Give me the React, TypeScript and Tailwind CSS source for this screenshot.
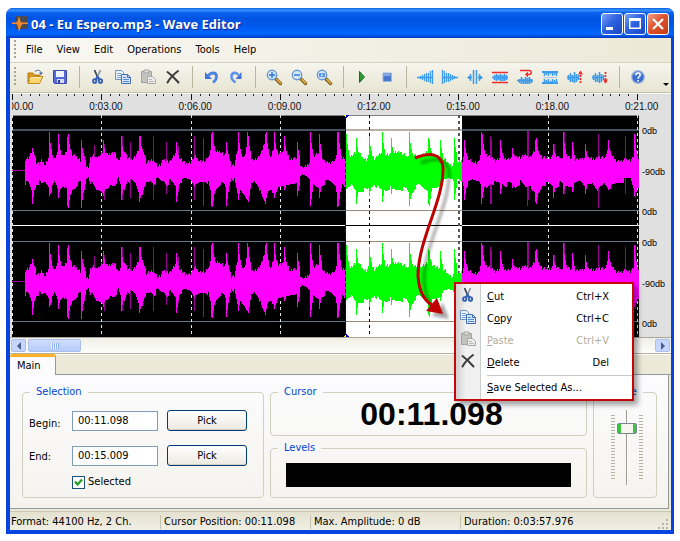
import type { ReactNode } from "react";

/* ---------- waveform data: [x, above, below] ---------- */
const BODY: number[][] = [
  [25, 11, 13], [28, 12, 13], [31, 18, 20], [33, 20, 22], [36, 8, 14], [39, 6, 12], [41, 10, 14], [45, 6, 12], [48, 12, 16],
  [50, 16, 22], [54, 12, 12], [57, 17, 18], [60, 18, 18], [63, 14, 14], [66, 20, 20], [68, 28, 30], [72, 15, 20], [76, 14, 15],
  [80, 10, 12], [84, 14, 20], [86, 4, 8], [88, 4, 6], [90, 12, 12], [93, 15, 15], [96, 12, 20], [100, 16, 20], [103, 20, 22],
  [107, 16, 20], [110, 17, 15], [114, 18, 15], [118, 9, 9], [121, 14, 18], [124, 20, 20], [127, 12, 10], [131, 11, 11],
  [135, 14, 13], [139, 22, 24], [143, 20, 22], [146, 8, 13], [150, 9, 11], [154, 10, 13], [157, 4, 9], [160, 5, 11],
  [163, 11, 11], [167, 9, 14], [170, 9, 11], [175, 17, 16], [178, 13, 13], [181, 11, 11], [185, 6, 9], [190, 8, 9],
  [195, 14, 16], [200, 9, 12], [205, 9, 11], [208, 13, 13], [212, 28, 30], [216, 18, 18], [220, 19, 13], [224, 15, 15],
  [227, 18, 24], [231, 5, 7], [234, 6, 10], [237, 20, 24], [240, 17, 20], [244, 13, 24], [247, 28, 28], [250, 11, 15],
  [254, 11, 11], [258, 13, 15], [261, 18, 26], [264, 28, 32], [268, 14, 20], [271, 14, 18], [274, 24, 28], [278, 17, 17],
  [283, 18, 15], [286, 18, 17], [290, 10, 15], [294, 12, 13], [298, 10, 10], [302, 2, 5], [306, 4, 6], [309, 8, 8],
  [312, 13, 15], [316, 16, 18], [320, 15, 17], [325, 8, 12], [330, 8, 11], [335, 10, 15], [338, 28, 32], [342, 12, 15],
  [346, 14, 18], [350, 14, 14], [354, 17, 20], [358, 18, 22], [362, 13, 20], [366, 11, 20], [370, 17, 18], [374, 12, 14],
  [380, 17, 20], [385, 16, 20], [390, 16, 18], [395, 19, 20], [400, 18, 19], [406, 14, 19], [410, 16, 26], [415, 15, 17],
  [419, 13, 15], [425, 17, 19], [430, 19, 19], [435, 14, 18], [440, 12, 14], [445, 11, 10], [448, 6, 8], [452, 5, 8],
  [455, 8, 12], [458, 8, 10], [462, 10, 12], [464, 18, 18], [468, 11, 13], [472, 8, 10], [478, 8, 10], [482, 22, 13],
  [486, 15, 18], [490, 13, 13], [495, 10, 13], [500, 13, 13], [505, 12, 15], [510, 11, 13], [515, 14, 17], [520, 13, 12],
  [525, 15, 17], [530, 13, 15], [536, 22, 28], [542, 13, 15], [548, 12, 13], [554, 15, 18], [560, 12, 13], [566, 15, 16],
  [570, 12, 15], [575, 11, 13], [580, 11, 10], [586, 13, 16], [592, 11, 13], [598, 13, 20], [604, 12, 13], [608, 22, 18],
  [612, 14, 16], [616, 10, 13], [620, 9, 12], [625, 11, 10], [630, 10, 8], [634, 14, 20], [639, 13, 20],
];

const PEAKS: number[][] = [
  [32, 22, 34], [49, 38, 26], [58, 36, 28], [67, 33, 36], [68, 36, 38], [81, 30, 38], [103, 30, 26],
  [121, 34, 30], [139, 34, 32], [140, 34, 28], [176, 28, 32], [211, 36, 36], [212, 38, 37], [226, 28, 36],
  [238, 38, 30], [247, 38, 30], [248, 34, 32], [265, 36, 34], [266, 38, 28], [274, 38, 28], [284, 34, 20],
  [297, 28, 26], [310, 38, 36], [319, 36, 28], [337, 38, 37], [338, 38, 36], [346, 36, 18], [356, 32, 34], [369, 34, 26],
  [382, 38, 32], [391, 32, 24], [409, 38, 36], [428, 32, 34], [429, 30, 36], [440, 30, 20],
  [454, 32, 30], [464, 30, 30], [481, 38, 34], [482, 36, 28], [500, 30, 24], [512, 22, 18], [535, 30, 32],
  [536, 32, 34], [553, 26, 28], [563, 38, 24], [572, 28, 22], [585, 26, 24], [608, 30, 20], [634, 36, 26],
];

const FAINT_PEAKS: number[][] = [
  [94, 25, 16], [104, 26, 30], [122, 34, 30], [130, 28, 28], [153, 34, 30], [166, 28, 24], [178, 24, 22], [194, 34, 30],
  [203, 32, 36], [213, 38, 32], [490, 34, 34], [491, 30, 34], [527, 39, 36], [528, 39, 30], [537, 30, 30], [554, 26, 20],
  [564, 38, 24], [573, 24, 22], [598, 36, 38], [625, 34, 24], [635, 36, 28],
];

const SEL_START = 346;
const SEL_END = 462;

function bodyAt(x: number) {
  let i = 0;
  while (i < BODY.length - 2 && BODY[i + 1][0] < x) i++;
  const a = BODY[i];
  const b = BODY[i + 1];
  const t = Math.max(0, Math.min(1, (x - a[0]) / (b[0] - a[0])));
  const noiseUp = ((x * 37) % 11) / 3 - 2;
  const noiseDown = ((x * 53) % 13) / 3 - 2;
  return [
    Math.max(2, Math.round(a[1] + (b[1] - a[1]) * t + noiseUp)),
    Math.max(3, Math.round(a[2] + (b[2] - a[2]) * t + noiseDown)),
  ];
}

function bars(cy: number, from: number, to: number) {
  let d = "";
  const bar = (x: number, u: number, w: number) => {
    if (x >= from && x < to) d += `M${x} ${cy - u}h1v${u + w}h-1z`;
  };
  for (let x = from; x < to; x++) {
    const [u, w] = bodyAt(x);
    bar(x, u, w);
  }
  for (const [x, u, w] of PEAKS) {
    bar(x, u, w);
    bar(x + 1, Math.round(u * 0.72), Math.round(w * 0.8));
    bar(x + 2, Math.round(u * 0.55), Math.round(w * 0.6));
  }
  return d;
}

const faint = (cy: number) => FAINT_PEAKS.map(([x, u, w]) => `M${x} ${cy - u}h1v${u + w}h-1z`).join("");

const GRID = [12, 101, 191, 280, 369, 458, 548, 637];

function Waveform() {
  return (
    <svg className="block h-[222px] min-w-0 flex-1" viewBox="12 115 627 222" preserveAspectRatio="none" shapeRendering="crispEdges" role="img" aria-label="Waveform">
      <rect x="12" y="115" width="627" height="222" fill="#000" />
      <rect x={SEL_START} y="115" width={SEL_END - SEL_START} height="222" fill="#fff" />
      <rect x="12" y="114" width="627" height="2" fill="#808080" />
      <rect x="12" y="129" width="627" height="2" fill="#44525e" />
      <rect x="12" y="210" width="627" height="1" fill="#64788a" />
      <rect x="12" y="225" width="627" height="1" fill="#fff" />
      <rect x="12" y="241" width="627" height="1" fill="#64788a" />
      <rect x="12" y="321" width="627" height="1" fill="#64788a" />
      <rect x={SEL_START} y="129" width="116" height="2" fill="#bcb0a6" />
      <rect x={SEL_START} y="210" width="116" height="1" fill="#9b8776" />
      <rect x={SEL_START} y="225" width="116" height="1" fill="#000" />
      <rect x={SEL_START} y="241" width="116" height="1" fill="#9b8776" />
      <rect x={SEL_START} y="321" width="116" height="1" fill="#9b8776" />
      {GRID.map((x) => (
        <path key={x} d={`M${x + 0.5} 115V337`} stroke={x === 369 ? "#000" : x === 458 ? "#555" : "#e4e4e4"} strokeWidth={x === 458 ? 2 : 1} strokeDasharray="3 3" />
      ))}
      <path d="M12 170h14v1h-14zM12 281h14v1h-14z" fill="#a000a0" />
      {[170, 281].map((cy) => (
        <g key={cy}>
          <path d={faint(cy)} fill="#980098" />
          <path d={bars(cy, 25, SEL_START)} fill="#ff00ff" />
          <path d={bars(cy, SEL_START, SEL_END)} fill="#00ff00" />
          <path d={bars(cy, SEL_END, 639)} fill="#ff00ff" />
        </g>
      ))}
      <path d="M345.5 115V337" stroke="#0000d0" strokeDasharray="4 2" />
      <path d="M343 115h3v3zM343 337h3v-3z" fill="#ffff00" />
      <path d="M346 115h3l-3 3zM346 334l3 3h-3z" fill="#0000d0" />
    </svg>
  );
}

/* ---------- icons ---------- */
function Icon({ children, size = 18 }: { children: ReactNode; size?: number }) {
  return (
    <svg width={size} height={size} viewBox="0 0 18 18" fill="none" aria-hidden="true">
      {children}
    </svg>
  );
}

const OpenIcon = () => (
  <Icon>
    <path d="M2 15V5h5l1 2h6v3" fill="#d99a1c" stroke="#b47a12" />
    <path d="M2 15.500l3-7h12l-3.500 7z" fill="#fcd670" stroke="#c58a1a" />
    <path d="M4 12l1-2.500h10" stroke="#fff1b8" />
    <path d="M9 3.500c3-2.500 6-1 6 2" stroke="#4b6fa8" />
    <path d="M13 4.500h4l-2 2.700z" fill="#4b6fa8" />
  </Icon>
);
const SaveIcon = () => (
  <Icon>
    <path d="M2.500 2.500h13v13h-12l-1-1z" fill="#5468d8" stroke="#3c49aa" />
    <path d="M5 3h8v6H5z" fill="#eef2fd" />
    <path d="M6 11h7v4H6z" fill="#d8dcec" />
    <path d="M7 12h2v3H7z" fill="#2f3c9c" />
  </Icon>
);
const CutIcon = () => (
  <Icon>
    <path d="M5.500 2l3.500 8" stroke="#3c4656" strokeWidth="1.800" />
    <path d="M11.500 2l-3.500 8" stroke="#8a98ac" strokeWidth="1.800" />
    <ellipse cx="5.700" cy="13" rx="1.600" ry="1.900" stroke="#3560b8" strokeWidth="1.900" />
    <ellipse cx="11.500" cy="13" rx="1.600" ry="1.900" stroke="#3560b8" strokeWidth="1.900" />
    <path d="M6.800 11.500l1.800-2.500 1.800 2.500" stroke="#3560b8" strokeWidth="2.200" />
  </Icon>
);
const CopyIcon = () => (
  <Icon>
    <path d="M1.500 2.500h6l2 2v7h-8z" fill="#eef5ff" stroke="#6a90c8" />
    <path d="M3 5.500h4M3 7.500h5M3 9.500h5" stroke="#7ea4dc" />
    <path d="M7.500 6.500h6l3 3v6h-9z" fill="#d4e6ff" stroke="#4270b4" />
    <path d="M9 9.500h3M9 11.500h6M9 13.500h6" stroke="#5a8ad0" />
    <path d="M13.500 6.500v3h3" stroke="#4270b4" />
  </Icon>
);
const PasteIcon = () => (
  <Icon>
    <path d="M2.500 3.500h10v11h-10z" fill="#c2c2bf" stroke="#a2a29e" />
    <path d="M5 2h5v3H5z" fill="#e0e0dc" stroke="#a2a29e" />
    <path d="M8.500 8.500h5l3 3v4h-8z" fill="#ececea" stroke="#a8a8a4" />
    <path d="M10 11.500h3M10 13.500h5" stroke="#b8b8b4" />
  </Icon>
);
const DeleteIcon = () => (
  <Icon>
    <path d="M3.500 4c4 3 7 6 11 10.500M14 3C10 6 6 10 3.500 14.500" stroke="#3c3c3c" strokeWidth="2" strokeLinecap="round" />
  </Icon>
);
const UndoIcon = () => (
  <Icon>
    <path d="M3 4v7h7z" fill="#3f74d8" />
    <path d="M6 8c3-4 8-4 8.500 0 .3 3-1.500 5-3.500 6.500" stroke="#4d83e2" strokeWidth="2.800" />
  </Icon>
);
const RedoIcon = () => (
  <Icon>
    <path d="M14.500 4v7h-6z" fill="#3f74d8" />
    <path d="M11.500 7C9 3.500 5 4.500 4.500 8c-.3 3 1.500 5 4 6.500" stroke="#5f92ea" strokeWidth="2.600" />
  </Icon>
);
function ZoomIcon({ mark }: { mark: string }) {
  return (
    <Icon>
      <path d="M11 11l4.500 4.500" stroke="#8a6420" strokeWidth="3.400" strokeLinecap="round" />
      <path d="M12 11.500l3.500 3.500" stroke="#e8b84a" strokeWidth="1.400" strokeLinecap="round" />
      <circle cx="7" cy="7" r="4.700" fill="#d4eafc" stroke="#6c98d0" strokeWidth="1.400" />
      <path d={mark} stroke="#2c72d4" strokeWidth="1.400" />
    </Icon>
  );
}
const PlayIcon = () => (
  <Icon>
    <path d="M6.500 3.500v11l5-5.500z" fill="#2f9a2f" stroke="#1d6c1d" />
  </Icon>
);
const StopIcon = () => (
  <Icon>
    <path d="M5 5h8.500v8.500H5z" fill="#4a78cc" stroke="#9ab4e4" />
    <path d="M5.500 5.500h7v2.500h-7z" fill="#86a8e4" />
  </Icon>
);
const FadeInIcon = () => (
  <Icon>
    <path d="M1 9.500h15M4.500 8v3M6.500 7v5M8.500 6v7M10.500 5v9M12.500 5v9M14.500 3v12M16.500 2v14" stroke="#3d9bea" strokeWidth="1.300" />
  </Icon>
);
const FadeOutIcon = () => (
  <Icon>
    <path d="M2 9.500h15M13.500 8v3M11.500 7v5M9.500 6v7M7.500 5v9M5.500 5v9M3.500 3v12M1.500 2v14" stroke="#3d9bea" strokeWidth="1.300" />
  </Icon>
);
const SilenceIcon = () => (
  <Icon>
    <path d="M7.500 2v14M10.500 2v14M4.500 6v7M13.500 6v7M2 9.500h4M12 9.500h4" stroke="#3d9bea" strokeWidth="1.500" />
    <path d="M5 6.500v6l-4-3zM13 6.500v6l4-3z" fill="#3d9bea" />
  </Icon>
);
const NormalizeIcon = () => (
  <Icon>
    <path d="M1 9.500h16M3.500 7v5M5.500 6v7M7.500 7v5M9.500 6v7M11.500 7v6M13.500 6v7M15.500 7v5" stroke="#3d9bea" strokeWidth="1.700" />
    <path d="M1 4.500h16M1 14.500h16" stroke="#ee2c2c" strokeWidth="1.400" />
  </Icon>
);
const ReverseIcon = () => (
  <Icon>
    <path d="M1 12.500h16M3.500 11v4M5.500 9v7M7.500 11v5M9.500 9v7M11.500 10v6M13.500 9v7M15.500 11v4" stroke="#3d9bea" strokeWidth="1.700" />
    <path d="M4 2.500h9c3 0 3 4 0 4h-2" stroke="#ee2c2c" strokeWidth="1.400" />
    <path d="M12 3.500v6l-3-3z" fill="#ee2c2c" />
  </Icon>
);
const InvertIcon = () => (
  <Icon>
    <path d="M1 4h16M1 15h16" stroke="#3d9bea" strokeWidth="2" />
    <path d="M3.500 3v5M5.500 3v4M7.500 3v5M9.500 3v3M11.500 3v5M13.500 3v4M15.500 3v5M3.500 11v4M5.500 12v4M7.500 11v4M9.500 13v3M11.500 11v4M13.500 12v4M15.500 11v4" stroke="#3d9bea" strokeWidth="1.500" />
    <path d="M2 9.500h14" stroke="#a8cdec" />
  </Icon>
);
function GainIcon({ up = false }: { up?: boolean }) {
  return (
    <Icon>
      <path d="M1 9.500h12M2.500 7v5M4.500 5v9M6.500 7v7M8.500 4v11M10.500 6v8M12.500 7v5" stroke="#3d9bea" strokeWidth="1.600" />
      <path d="M14.500 4v11" stroke="#ee2c2c" strokeWidth="1.700" strokeDasharray="2 1" />
      <path d={up ? "M12 6.500l2.500-4L17 6.500z" : "M12 11.500l2.500 4L17 11.500z"} fill="#ee2c2c" />
    </Icon>
  );
}
const HelpIcon = () => (
  <Icon>
    <circle cx="9" cy="9" r="6.300" fill="#3c6fd2" stroke="#a9b8da" strokeWidth="1.200" />
    <path d="M5 6.500c1-3 7-3 8 0" stroke="#86aef0" />
    <path d="M6.800 7.200c0-3 4.600-2.800 4.400-.1C11 8.800 9 8.800 9 10.800M9 12v1.600" stroke="#fff" strokeWidth="1.600" />
  </Icon>
);

/* ---------- small parts ---------- */
const Sep = () => <span className="ml-[7px] mr-[5px] h-[22px] w-px shrink-0 bg-[#b9b5a0]" />;

function Tool({ label, children }: { label: string; children: ReactNode }) {
  return (
    <button type="button" aria-label={label} className="flex h-6 w-[25px] shrink-0 items-center justify-center">
      {children}
    </button>
  );
}

const Grip = () => <span className="h-5 w-0.5 shrink-0 bg-[repeating-linear-gradient(#a8a593_0_2px,transparent_2px_4px)]" />;

function MenuRow({ icon, keyChar, before = "", after, shortcut, disabled = false }: {
  icon?: ReactNode; keyChar: string; before?: string; after: string; shortcut?: string; disabled?: boolean;
}) {
  return (
    <button type="button" role="menuitem" disabled={disabled} className="flex h-[22px] w-full items-center pr-[23px] text-left text-black disabled:text-[#b1ad9b]">
      <span className="flex w-7 shrink-0 items-start pb-1">{icon}</span>
      <span className="whitespace-nowrap">{before}<span className="underline">{keyChar}</span>{after}</span>
      {shortcut && <span className="ml-auto">{shortcut}</span>}
    </button>
  );
}

const GROUP = "min-w-0 rounded-[4px] border border-[#d0d0bf]";
const LEGEND = "ml-[7px] px-1.5 leading-[14px] text-[#0046d5]";
const PICK = "ml-[9px] h-[21px] w-20 rounded-[3px] border border-[#003c74] bg-linear-to-b from-white to-[#ece9e0] shadow-[inset_0_-1px_0_#d6d0c4]";
const FIELD = "h-5 w-[86px] border border-[#7f9db9] bg-white px-[5px] text-black outline-none";

function DbScale() {
  return (
    <div className="flex h-[95px] flex-col justify-between">
      <span>0db</span>
      <span>-90db</span>
      <span>0db</span>
    </div>
  );
}

const TIMES = ["0:00.00", "0:03.00", "0:06.00", "0:09.00", "0:12.00", "0:15.00", "0:18.00"];

function RulerTicks() {
  return (
    <svg className="block h-1.5 w-full" viewBox="0 0 90 6" preserveAspectRatio="none" shapeRendering="crispEdges" aria-hidden="true">
      <path d="M0 0h1v6h-1z" fill="#111" />
      {[9, 18, 27, 36, 45, 54, 63, 72, 81].map((x) => (
        <path key={x} d={`M${x} 0h1v2h-1z`} fill="#222" />
      ))}
    </svg>
  );
}

const CAPTION_BTN = "flex size-[22px] items-center justify-center rounded-[3px] border border-white";

export default function App() {
  return (
    <div className="relative w-full bg-white pb-1.5 pl-1.5 pr-1.5 pt-2 font-['DejaVu_Sans_Condensed','Noto_Sans',sans-serif] text-[11px] leading-[14px] text-black">
      <div className="rounded-t-[7px] border-b-4 border-l-4 border-r-[3px] border-[#0844e0] bg-[#ece9d8]">
        {/* title bar */}
        <header className="-ml-1 -mr-[3px] flex h-[30px] items-center rounded-t-[7px] bg-[linear-gradient(#0a5ce0_0,#3a93ff_7%,#0a60ec_16%,#0054e3_35%,#0058ec_60%,#0066ff_86%,#0050e0_94%,#0038b8_100%)] pl-1.5 pr-[5px] pt-0.5">
          <svg width="16" height="18" viewBox="0 0 16 18" aria-hidden="true">
            <path d="M3 1h13v13H3z" fill="#4a4a52" />
            <path d="M0 7.500h4l1.500-1L7 1l1.500 5.500 1.500 1h6V9h-5l-1.500 1L7 17l-1.500-7L4 9H0z" fill="#f08a2c" />
          </svg>
          <h1 className="ml-[3px] whitespace-nowrap font-['Open_Sans','Noto_Sans',sans-serif] text-[13px] font-bold text-white [text-shadow:1px_1px_0_#0a2a90]">04 - Eu Espero.mp3 - Wave Editor</h1>
          <div className="ml-auto flex gap-px">
            <button type="button" aria-label="Minimize" className={CAPTION_BTN + " bg-[linear-gradient(135deg,#7ba2f5,#2e63e0_45%,#1a46c4)]"}>
              <svg width="20" height="20" viewBox="0 0 20 20"><path d="M4 13h7v3H4z" fill="#fff" /></svg>
            </button>
            <button type="button" aria-label="Maximize" className={CAPTION_BTN + " bg-[linear-gradient(135deg,#7ba2f5,#2e63e0_45%,#1a46c4)]"}>
              <svg width="20" height="20" viewBox="0 0 20 20"><path d="M4 4h12v11H4zM5.500 7v6.500h9V7z" fill="#fff" fillRule="evenodd" /></svg>
            </button>
            <button type="button" aria-label="Close" className={CAPTION_BTN + " bg-[linear-gradient(135deg,#f0a088,#e0532f_45%,#c03a14)]"}>
              <svg width="20" height="20" viewBox="0 0 20 20"><path d="M5 5l10 10M15 5L5 15" stroke="#fff" strokeWidth="2.200" /></svg>
            </button>
          </div>
        </header>

        {/* menu bar */}
        <nav className="flex h-[25px] items-center gap-3.5 border-b border-[#d6d2c0] bg-linear-to-r from-[#f8f7f2] to-[#ece9d8] pl-1">
          <Grip />
          {["File", "View", "Edit", "Operations", "Tools", "Help"].map((m) => (
            <button key={m} type="button" className="first-of-type:-ml-1">{m}</button>
          ))}
        </nav>

        {/* toolbar */}
        <div role="toolbar" className="flex h-[30px] items-center border-b border-[#c6c2ac] bg-linear-to-b from-[#f6f5ee] to-[#e8e5d2] pb-px pl-1">
          <Grip />
          <span className="w-1.5 shrink-0" />
          <Tool label="Open"><OpenIcon /></Tool>
          <Tool label="Save"><SaveIcon /></Tool>
          <Sep />
          <Tool label="Cut"><CutIcon /></Tool>
          <Tool label="Copy"><CopyIcon /></Tool>
          <Tool label="Paste"><PasteIcon /></Tool>
          <Tool label="Delete"><DeleteIcon /></Tool>
          <Sep />
          <Tool label="Undo"><UndoIcon /></Tool>
          <Tool label="Redo"><RedoIcon /></Tool>
          <Sep />
          <Tool label="Zoom in"><ZoomIcon mark="M4 7h6M7 4v6" /></Tool>
          <Tool label="Zoom out"><ZoomIcon mark="M4 7h6" /></Tool>
          <Tool label="Actual size"><ZoomIcon mark="M5 5v4M9 5v4M6.500 6h1.200M6.500 8.500h1.200" /></Tool>
          <Sep />
          <Tool label="Play"><PlayIcon /></Tool>
          <Tool label="Stop"><StopIcon /></Tool>
          <Sep />
          <Tool label="Fade in"><FadeInIcon /></Tool>
          <Tool label="Fade out"><FadeOutIcon /></Tool>
          <Tool label="Insert silence"><SilenceIcon /></Tool>
          <Tool label="Normalize"><NormalizeIcon /></Tool>
          <Tool label="Reverse"><ReverseIcon /></Tool>
          <Tool label="Invert"><InvertIcon /></Tool>
          <Tool label="Gain up"><GainIcon up /></Tool>
          <Tool label="Gain down"><GainIcon /></Tool>
          <Sep />
          <Tool label="Help"><HelpIcon /></Tool>
          <button type="button" aria-label="More tools" className="ml-auto mr-0.5 self-end pb-1">
            <svg width="6" height="4" viewBox="0 0 6 4"><path d="M0 0h6L3 3z" fill="#000" /></svg>
          </button>
        </div>

        {/* time ruler */}
        <div className="flex h-[22px] overflow-hidden border-t border-white bg-[#e0e0e0] pl-0.5 font-['Liberation_Sans',Arial,sans-serif] text-[10px] text-[#111]">
          <div className="grid min-w-0 flex-1 grid-cols-7 overflow-hidden">
            {TIMES.map((t) => (
              <div key={t} className="min-w-0">
                <RulerTicks />
                <span className="-ml-3 block whitespace-nowrap">{t}</span>
              </div>
            ))}
          </div>
          <div className="w-[34px] shrink-0">
            <div className="h-1.5 w-px bg-[#111]" />
            <span className="relative -ml-3 block whitespace-nowrap">0:21.00</span>
          </div>
        </div>

        {/* wave display */}
        <div className="flex bg-[#e0e0e0] pl-0.5">
          <Waveform />
          <div className="flex w-8 shrink-0 flex-col gap-[17px] pl-[3px] pt-[9px] font-['Liberation_Sans',Arial,sans-serif] text-[9px]">
            <DbScale />
            <DbScale />
          </div>
        </div>

        {/* horizontal scroll bar */}
        <div className="flex h-4 items-center gap-0.5 border-t border-[#aaa797] bg-linear-to-b from-[#f0efe6] to-[#fefefb] px-px">
          <button type="button" aria-label="Scroll left" className="flex h-[13px] w-[15px] items-center justify-center rounded-[2px] border border-[#a9bfee] bg-[#c6d5fd]">
            <svg width="6" height="8" viewBox="0 0 6 8"><path d="M5 0v8L1 4z" fill="#4d6185" /></svg>
          </button>
          <div className="flex h-[13px] w-[53px] items-center justify-center gap-px rounded-[2px] border border-[#a9bfee] bg-linear-to-b from-[#d0dcfe] to-[#b8cbf8]">
            {[0, 1, 2, 3].map((i) => <span key={i} className="h-1.5 w-px bg-[#eef4fe] shadow-[1px_0_0_#8cb0f8]" />)}
          </div>
          <button type="button" aria-label="Scroll right" className="ml-auto flex h-[13px] w-[15px] items-center justify-center rounded-[2px] border border-[#a9bfee] bg-[#c6d5fd]">
            <svg width="6" height="8" viewBox="0 0 6 8"><path d="M1 0v8l4-4z" fill="#4d6185" /></svg>
          </button>
        </div>

        {/* tabs */}
        <div role="tablist" className="flex h-[22px] items-end border-b border-[#919b9c] bg-[#ece9d8] shadow-[inset_0_1px_0_#b4b19f,inset_0_2px_0_#fff]">
          <button type="button" role="tab" aria-selected="true" className="-mb-px h-[21px] w-[46px] rounded-t-[3px] border-r border-t-[3px] border-r-[#919b9c] border-t-[#ffb02c] bg-[#fcfcfe] pl-[7px] text-left">Main</button>
        </div>

        {/* main panel */}
        <main className="mr-0.5 flex gap-1.5 border-b border-r border-[#919b9c] bg-linear-to-b from-[#fcfcfe] to-[#f4f3ee] pb-2.5 pl-3 pr-[11px] pt-2.5">
          <fieldset className={GROUP + " h-[113px] w-[242px] shrink-0"}>
            <legend className={LEGEND}>Selection</legend>
            <div className="grid grid-cols-[49px_86px_89px] items-center gap-y-3.5 pt-[11px]">
              <label htmlFor="begin" className="pl-1.5 pt-1.5">Begin:</label>
              <input id="begin" className={FIELD} defaultValue="00:11.098" />
              <button type="button" className={PICK}>Pick</button>
              <label htmlFor="end" className="pl-1.5 pt-0.5">End:</label>
              <input id="end" className={FIELD} defaultValue="00:15.009" />
              <button type="button" className={PICK}>Pick</button>
            </div>
            <label className="ml-[49px] mt-[9px] flex w-fit items-center gap-[3px]">
              <span className="grid size-[13px]">
                <input type="checkbox" defaultChecked className="col-start-1 row-start-1 size-[13px] appearance-none border border-[#1c5180] bg-white" />
                <svg className="pointer-events-none col-start-1 row-start-1" width="13" height="13" viewBox="0 0 13 13"><path d="M3 5.500l2.500 3L10 3.500" fill="none" stroke="#21a121" strokeWidth="2.200" /></svg>
              </span>
              Selected
            </label>
          </fieldset>

          <div className="flex min-w-0 flex-1 flex-col gap-[5px]">
            <fieldset className={GROUP + " h-[51px]"}>
              <legend className={LEGEND}>Cursor</legend>
              <output className="block pl-1.5 text-center font-['Liberation_Sans',Arial,sans-serif] text-[32px] font-bold leading-[30px]">00:11.098</output>
            </fieldset>
            <fieldset className={GROUP + " h-[57px]"}>
              <legend className={LEGEND}>Levels</legend>
              <div className="mx-[15px] mt-2 h-6 bg-black" />
            </fieldset>
          </div>

          <fieldset className={GROUP + " h-[113px] w-16 shrink-0"}>
            <legend className="px-1.5 leading-[14px] text-[#0046d5]">Volume</legend>
            <div className="flex items-center justify-center gap-0.5 pl-[3px] pt-[11px]">
              <span className="h-[66px] w-1 bg-[repeating-linear-gradient(#b5b3a6_0_1px,transparent_1px_3px)]" />
              <input
                type="range"
                aria-label="Volume"
                min={0}
                max={100}
                defaultValue={79}
                className="h-[75px] w-5 appearance-none bg-[linear-gradient(90deg,transparent_9px,#9c9b91_9px_10px,#fff_10px_11px,transparent_11px)] [direction:rtl] [writing-mode:vertical-lr] [&::-webkit-slider-thumb]:h-[11px] [&::-webkit-slider-thumb]:w-5 [&::-webkit-slider-thumb]:appearance-none [&::-webkit-slider-thumb]:rounded-[2px] [&::-webkit-slider-thumb]:border [&::-webkit-slider-thumb]:border-[#778892] [&::-webkit-slider-thumb]:bg-[linear-gradient(90deg,#3cc83c_3px,#f6f5f0_3px_15px,#3cc83c_15px)]"
              />
              <span className="h-[66px] w-1 bg-[repeating-linear-gradient(#b5b3a6_0_1px,transparent_1px_3px)]" />
            </div>
          </fieldset>
        </main>

        {/* status bar */}
        <footer className="mt-0.5 flex h-[19px] items-center border-t border-[#c9c6b4] bg-linear-to-b from-[#e4e1d0] to-[#f1efe4] pl-px pt-0.5">
          <span className="w-[149px] shrink-0 whitespace-nowrap">Format: 44100 Hz, 2 Ch.</span>
          <span className="w-[150px] shrink-0 whitespace-nowrap border-l border-[#c5c2b0] pl-[3px]">Cursor Position: 00:11.098</span>
          <span className="w-[150px] shrink-0 whitespace-nowrap border-l border-[#c5c2b0] pl-[3px]">Max. Amplitude: 0 dB</span>
          <span className="whitespace-nowrap border-l border-[#c5c2b0] pl-[3px]">Duration: 0:03:57.976</span>
          <svg className="ml-auto mr-0.5 self-end" width="12" height="12" viewBox="0 0 12 12" aria-hidden="true">
            <path d="M9 1h2v2H9zM9 5h2v2H9zM9 9h2v2H9zM5 5h2v2H5zM5 9h2v2H5zM1 9h2v2H1z" fill="#b8b4a2" />
          </svg>
        </footer>
      </div>

      {/* drag arrow */}
      <svg className="pointer-events-none absolute left-[405px] top-[145px]" width="60" height="185" viewBox="405 145 60 185" fill="none" aria-hidden="true">
        <defs>
          <filter id="soft" x="-30%" y="-10%" width="160%" height="120%"><feGaussianBlur stdDeviation="1.500" /></filter>
        </defs>
        <g transform="translate(6 5)" opacity="0.350" filter="url(#soft)">
          <path d="M415 158C430 152 442 153 443 168C444 200 418 240 418 276C419 292 424 300 433 306" stroke="#000" strokeWidth="3" />
          <path d="M443 314l-17-3 11-13z" fill="#000" />
        </g>
        <path d="M415 158C430 152 442 153 443 168C444 200 418 240 418 276C419 292 424 300 433 306" stroke="#c00000" strokeWidth="3" />
        <path d="M443 314l-17-3 11-13z" fill="#c00000" />
      </svg>

      {/* context menu */}
      <div role="menu" className="absolute left-[454px] top-[282px] w-[180px] border-2 border-[#c40808] bg-[linear-gradient(90deg,#cfcfcf_0,#f1f1f1_10px,#f0f0f0_24px,#c8d0cc_24px,#c8d0cc_25px,#fff_25px)] pl-[3px] pt-0.5 shadow-[4px_4px_5px_rgba(0,0,0,0.35)]">
        <MenuRow icon={<CutIcon />} keyChar="C" after="ut" shortcut="Ctrl+X" />
        <MenuRow icon={<CopyIcon />} before="C" keyChar="o" after="py" shortcut="Ctrl+C" />
        <MenuRow icon={<PasteIcon />} keyChar="P" after="aste" shortcut="Ctrl+V" disabled />
        <MenuRow icon={<DeleteIcon />} keyChar="D" after="elete" shortcut="Del" />
        <hr className="my-px ml-7 border-[#c2ccc8]" />
        <MenuRow keyChar="S" after="ave Selected As..." />
      </div>
    </div>
  );
}
